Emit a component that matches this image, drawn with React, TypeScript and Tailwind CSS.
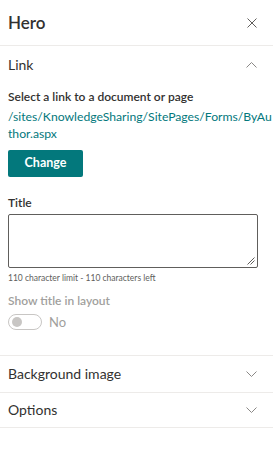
import React from "react";

const font = { fontFamily: 'Lato, "Open Sans", sans-serif' };

function Chevron({ up }: { up?: boolean }) {
  return (
    <svg width="11" height="6" viewBox="0 0 11 6" className="text-[#8a8886]">
      {up ? (
        <path d="M0.5 5.5 L5.5 0.5 L10.5 5.5" fill="none" stroke="currentColor" strokeWidth="1" />
      ) : (
        <path d="M0.5 0.5 L5.5 5.5 L10.5 0.5" fill="none" stroke="currentColor" strokeWidth="1" />
      )}
    </svg>
  );
}

export default function App() {
  return (
    <div className="w-[273px] h-[454px] bg-white text-[#323130]" style={font}>
      <div className="h-[46px] flex items-center justify-between pl-2 pr-4 border-b border-[#edebe9]">
        <span className="text-[17px] font-semibold leading-none">Hero</span>
        <svg width="10" height="10" viewBox="0 0 10 10" className="text-[#605e5c]">
          <path d="M0.5 0.5 L9.5 9.5 M9.5 0.5 L0.5 9.5" stroke="currentColor" strokeWidth="1" />
        </svg>
      </div>
      <div className="h-[38px] flex items-center justify-between pl-2 pr-4">
        <span className="text-[14px] leading-none">Link</span>
        <Chevron up />
      </div>
      <div className="px-2 pt-[4px] pb-[25px] border-b border-[#edebe9]">
        <div className="text-[12px] font-semibold leading-[18px]">Select a link to a document or page</div>
        <div className="text-[12.2px] leading-[17px] text-[#03787c] mt-[2px] whitespace-nowrap">
          /sites/KnowledgeSharing/SitePages/Forms/ByAu
          <br />
          thor.aspx
        </div>
        <button className="mt-[8px] w-[75px] h-[27px] rounded-[2px] bg-[#03787c] text-white text-[12.5px] font-bold">
          Change
        </button>
        <div className="mt-[17px] text-[12px] font-semibold leading-[18px]">Title</div>
        <div className="mt-[2px] relative w-[250px] h-[54px] border border-[#605e5c] rounded-[2px]">
          <svg width="8" height="8" viewBox="0 0 8 8" className="absolute right-[2px] bottom-[2px] text-[#605e5c]">
            <path d="M7.5 0.5 L0.5 7.5 M7.5 3.5 L3.5 7.5" stroke="currentColor" strokeWidth="1" />
          </svg>
        </div>
        <div className="mt-[3px] text-[8.5px] leading-[14px] text-[#605e5c]">110 character limit - 110 characters left</div>
        <div className="mt-[7px] text-[12px] font-semibold leading-[18px] text-[#a19f9d]">Show title in layout</div>
        <div className="mt-[4px] flex items-center gap-[7px]">
          <div className="w-[34px] h-[16px] rounded-full border border-[#c8c6c4] flex items-center pl-[3px]">
            <div className="w-[10px] h-[10px] rounded-full bg-[#c8c6c4]" />
          </div>
          <span className="text-[13px] text-[#a19f9d] leading-none">No</span>
        </div>
      </div>
      <div className="h-[37px] flex items-center justify-between pl-2 pr-4 border-b border-[#edebe9]">
        <span className="text-[14px] leading-none">Background image</span>
        <Chevron />
      </div>
      <div className="h-[35px] flex items-center justify-between pl-2 pr-4 border-b border-[#edebe9]">
        <span className="text-[14px] leading-none">Options</span>
        <Chevron />
      </div>
    </div>
  );
}
